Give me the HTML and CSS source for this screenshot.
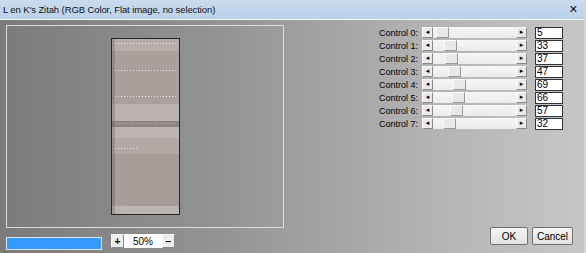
FILE: index.html
```html
<!DOCTYPE html>
<html>
<head>
<meta charset="utf-8">
<link rel="stylesheet" href="styles.css">
</head>
<body>
<div class="window">
  <div class="titlebar">
    <span class="title">L en K's Zitah (RGB Color, Flat image, no selection)</span>
    <span class="close">✕</span>
  </div>
  <div class="main">
    <div class="left">
      <div class="preview">
        <div class="image"></div>
      </div>
      <div class="bottom">
        <div class="progress"></div>
        <div class="zoom">
          <span class="zbtn">+</span>
          <span class="zval">50%</span>
          <span class="zbtn">−</span>
        </div>
      </div>
    </div>
    <div class="right">
      <div class="controls">
        <span class="label">Control 0:</span>
        <div class="slider"><span class="arr">◂</span><div class="track"><span class="thumb" style="margin-left:3px"></span></div><span class="arr">▸</span></div>
        <span class="value">5</span>

        <span class="label">Control 1:</span>
        <div class="slider"><span class="arr">◂</span><div class="track"><span class="thumb" style="margin-left:11px"></span></div><span class="arr">▸</span></div>
        <span class="value">33</span>

        <span class="label">Control 2:</span>
        <div class="slider"><span class="arr">◂</span><div class="track"><span class="thumb" style="margin-left:12px"></span></div><span class="arr">▸</span></div>
        <span class="value">37</span>

        <span class="label">Control 3:</span>
        <div class="slider"><span class="arr">◂</span><div class="track"><span class="thumb" style="margin-left:15px"></span></div><span class="arr">▸</span></div>
        <span class="value">47</span>

        <span class="label">Control 4:</span>
        <div class="slider"><span class="arr">◂</span><div class="track"><span class="thumb" style="margin-left:20px"></span></div><span class="arr">▸</span></div>
        <span class="value">69</span>

        <span class="label">Control 5:</span>
        <div class="slider"><span class="arr">◂</span><div class="track"><span class="thumb" style="margin-left:19px"></span></div><span class="arr">▸</span></div>
        <span class="value">66</span>

        <span class="label">Control 6:</span>
        <div class="slider"><span class="arr">◂</span><div class="track"><span class="thumb" style="margin-left:17px"></span></div><span class="arr">▸</span></div>
        <span class="value">57</span>

        <span class="label">Control 7:</span>
        <div class="slider"><span class="arr">◂</span><div class="track"><span class="thumb" style="margin-left:10px"></span></div><span class="arr">▸</span></div>
        <span class="value">32</span>
      </div>
      <div class="buttons">
        <span class="btn ok">OK</span>
        <span class="btn cancel">Cancel</span>
      </div>
    </div>
  </div>
</div>
</body>
</html>
```

FILE: styles.css
```css
html, body {
  margin: 0;
  padding: 0;
}
body {
  width: 586px;
  height: 253px;
  overflow: hidden;
  font-family: "Liberation Sans", Arial, sans-serif;
  font-size: 9px;
  color: #000;
}
.window {
  width: 586px;
  height: 253px;
  display: flex;
  flex-direction: column;
  background: linear-gradient(to right, #7b7b7b 0%, #959595 40%, #b4b4b4 75%, #c6c6c6 100%);
  box-sizing: border-box;
  border-right: 2px solid #d6d6d6;
}
.titlebar {
  height: 19px;
  background: linear-gradient(to bottom, #c8dbef, #bcd2ea);
  border-bottom: 1px solid #eef3f8;
  display: flex;
  align-items: center;
  justify-content: space-between;
  padding: 0 6px 0 3px;
  flex: none;
}
.title {
  font-size: 9.5px;
  color: #111;
  letter-spacing: -0.1px;
}
.close {
  font-size: 11px;
  font-weight: bold;
  color: #111;
  font-family: "DejaVu Sans", sans-serif;
}
.main {
  flex: 1;
  display: flex;
  padding: 5px 0 0 6px;
}
.left {
  width: 278px;
  display: flex;
  flex-direction: column;
}
.preview {
  width: 278px;
  height: 203px;
  box-sizing: border-box;
  border: 1px solid #dcdcdc;
  display: flex;
  justify-content: center;
  padding-top: 12px;
}
.image {
  width: 69px;
  height: 177px;
  box-sizing: border-box;
  border: 1px solid #252525;
  background:
    repeating-linear-gradient(to right, rgba(255,255,255,0.75) 0 1px, transparent 1px 3px) 3px 4px / 63px 1px no-repeat,
    repeating-linear-gradient(to right, rgba(255,255,255,0.7) 0 1px, transparent 1px 3px) 3px 31px / 63px 1px no-repeat,
    repeating-linear-gradient(to right, rgba(255,255,255,0.7) 0 1px, transparent 1px 3px) 3px 57px / 63px 1px no-repeat,
    repeating-linear-gradient(to right, rgba(200,190,186,0.8) 0 1px, transparent 1px 3px) 3px 84px / 63px 1px no-repeat,
    repeating-linear-gradient(to right, rgba(255,255,255,0.7) 0 1px, transparent 1px 3px) 3px 109px / 24px 1px no-repeat,
    repeating-linear-gradient(to right, rgba(120,110,106,0.6) 0 1px, transparent 1px 3px) 18px 165px / 48px 1px no-repeat,
    linear-gradient(to right, rgba(80,70,68,0.25) 0px, rgba(80,70,68,0.25) 3px, transparent 3px),
    linear-gradient(to bottom,
      #b7aeaa 0px, #b7aeaa 12px,
      #a99f9b 12px, #a99f9b 65px,
      #bab2ae 65px, #bab2ae 82px,
      #8e8683 82px, #8e8683 88px,
      #bcb4b0 88px, #bcb4b0 99px,
      #b2a9a5 99px, #b2a9a5 115px,
      #a69d99 115px, #a69d99 167px,
      #bcb4b0 167px, #bcb4b0 177px);
}
.bottom {
  display: flex;
  align-items: flex-start;
  margin-top: 6px;
}
.progress {
  width: 96px;
  height: 13px;
  margin-top: 3px;
  box-sizing: border-box;
  background: #3399ff;
  border: 1px solid #d8e8f6;
}
.zoom {
  display: flex;
  margin-left: 9px;
  height: 14px;
}
.zbtn {
  width: 13px;
  height: 14px;
  box-sizing: border-box;
  background: #ececec;
  border: 1px solid #f8f8f8;
  border-right-color: #888;
  border-bottom-color: #888;
  display: flex;
  align-items: center;
  justify-content: center;
  font-size: 10px;
  font-weight: bold;
}
.zval {
  width: 38px;
  height: 14px;
  background: #fff;
  display: flex;
  align-items: center;
  justify-content: center;
  font-size: 10px;
}
.right {
  flex: 1;
  display: flex;
  flex-direction: column;
  padding-left: 94px;
}
.controls {
  display: grid;
  grid-template-columns: 44px 105px 36px;
  grid-auto-rows: 13px;
  column-gap: 0;
  margin-top: 1px;
  align-items: center;
}
.label {
  text-align: right;
  white-space: nowrap;
  font-size: 9px;
  padding-right: 4px;
}
.slider {
  height: 11px;
  display: flex;
  background: #f0f0f0;
}
.arr {
  width: 11px;
  height: 11px;
  box-sizing: border-box;
  background: #eaeaea;
  border: 1px solid #fafafa;
  border-right-color: #8a8a8a;
  border-bottom-color: #8a8a8a;
  font-size: 7px;
  line-height: 9px;
  text-align: center;
  font-family: "DejaVu Sans", sans-serif;
  color: #000;
}
.track {
  flex: 1;
  height: 11px;
  display: flex;
  background: linear-gradient(to bottom, #f6f6f6, #ebebeb);
}
.thumb {
  width: 13px;
  height: 11px;
  box-sizing: border-box;
  background: #e8e8e8;
  border: 1px solid #fcfcfc;
  border-right-color: #9a9a9a;
  border-bottom-color: #9a9a9a;
}
.value {
  height: 12px;
  margin-left: 8px;
  box-sizing: border-box;
  background: #fff;
  border: 1px solid #333;
  font-size: 10px;
  line-height: 10px;
  padding-left: 1px;
}
.buttons {
  display: flex;
  justify-content: flex-end;
  gap: 4px;
  margin-top: auto;
  margin-bottom: 8px;
  padding-right: 11px;
}
.btn {
  height: 18px;
  box-sizing: border-box;
  background: linear-gradient(to bottom, #f4f4f4, #e2e2e2);
  border: 1px solid #707070;
  display: flex;
  align-items: center;
  justify-content: center;
  font-size: 10px;
  border-radius: 2px;
}
.ok { width: 38px; }
.cancel { width: 41px; }
```
